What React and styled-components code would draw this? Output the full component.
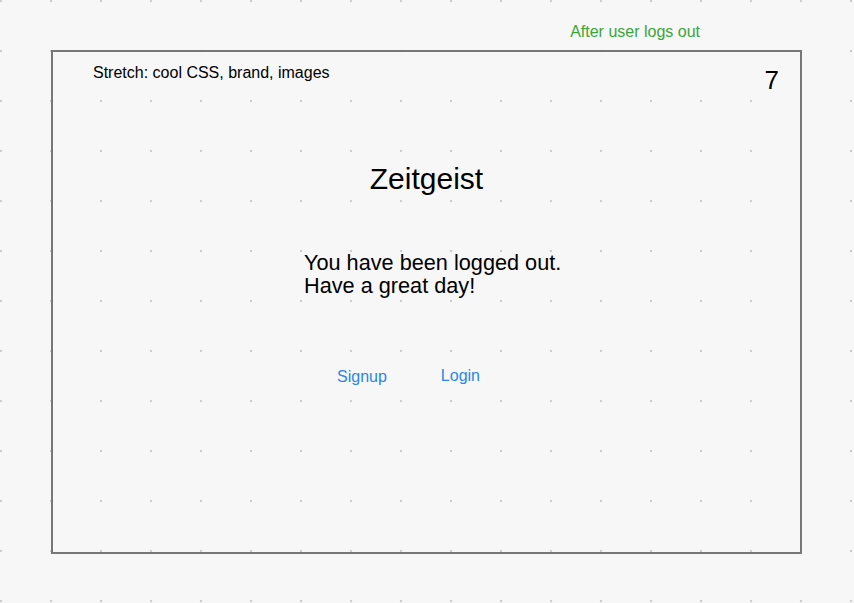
import styled, { createGlobalStyle } from "styled-components";

const GlobalStyle = createGlobalStyle`
  html, body {
    margin: 0;
    padding: 0;
  }
  body {
    font-family: "Liberation Sans", Arial, Helvetica, sans-serif;
    background-color: #f7f7f7;
    color: #000;
  }
`;

function App() {
  return (
    <>
      <GlobalStyle />
      <Canvas>
        <Caption>After user logs out</Caption>
        <Frame>
          <TopRow>
            <Note>Stretch: cool CSS, brand, images</Note>
            <PageNumber>7</PageNumber>
          </TopRow>
          <Title>Zeitgeist</Title>
          <Message>
            You have been logged out.
            <br />
            Have a great day!
          </Message>
          <Links>
            <TextLink href="#" $drop={1}>
              Signup
            </TextLink>
            <TextLink href="#">Login</TextLink>
          </Links>
        </Frame>
      </Canvas>
    </>
  );
}

export default App;

const Canvas = styled.div`
  min-height: 100vh;
  box-sizing: border-box;
  padding: 0 52px 0 51px;
  background-image: radial-gradient(circle, #cdcdcd 1.1px, transparent 1.6px);
  background-size: 50px 50px;
  background-position: -24px -24px;
`;

const Caption = styled.div`
  box-sizing: border-box;
  height: 50px;
  padding: 23px 102px 0 0;
  text-align: right;
  font-size: 16px;
  line-height: 18px;
  color: #3aa53a;
`;

const Frame = styled.div`
  width: 751px;
  height: 504px;
  box-sizing: border-box;
  border: 2px solid #777777;
  display: flex;
  flex-direction: column;
`;

const TopRow = styled.div`
  display: flex;
  justify-content: space-between;
  align-items: flex-start;
  padding: 12px 21px 0 40px;
`;

const Note = styled.span`
  font-size: 16px;
  line-height: 18px;
`;

const PageNumber = styled.span`
  margin-top: 1px;
  font-size: 26px;
  line-height: 30px;
`;

const Title = styled.h1`
  margin: 67px 0 0;
  text-align: center;
  font-size: 30px;
  font-weight: 400;
  line-height: 34px;
`;

const Message = styled.p`
  margin: 55px 0 0 251px;
  font-size: 21.7px;
  line-height: 23px;
`;

const Links = styled.div`
  display: flex;
  align-items: flex-start;
  gap: 54px;
  margin: 70px 0 0 284px;
`;

const TextLink = styled.a`
  padding-top: ${(p) => p.$drop || 0}px;
  font-size: 16px;
  line-height: 18px;
  color: #2a86e8;
  text-decoration: none;
`;
